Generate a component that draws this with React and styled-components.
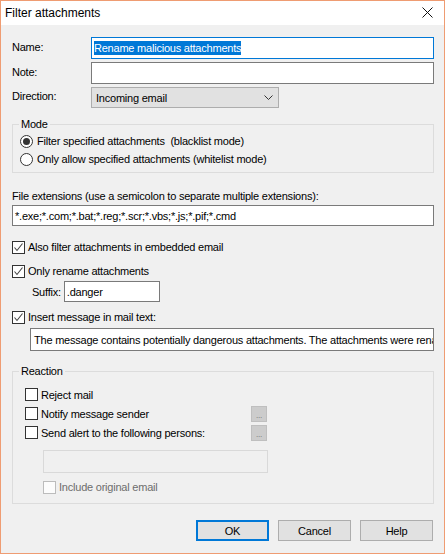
import React from "react";
import styled, { createGlobalStyle } from "styled-components";

const GlobalStyle = createGlobalStyle`
  html, body {
    margin: 0;
    padding: 0;
    background: #ffffff;
  }
  * {
    box-sizing: border-box;
  }
`;

function Check() {
  return (
    <svg width="11" height="11" viewBox="0 0 11 11">
      <polyline
        points="1.5,5.5 4,8.5 9.5,1.5"
        fill="none"
        stroke="#444"
        strokeWidth="1.1"
      />
    </svg>
  );
}

function CheckItem({ label, checked, disabled, indent }) {
  return (
    <CheckRow $indent={indent} $disabled={disabled}>
      <CheckBox $disabled={disabled}>{checked ? <Check /> : null}</CheckBox>
      <span>{label}</span>
    </CheckRow>
  );
}

function RadioItem({ label, checked }) {
  return (
    <RadioRow>
      <RadioCircle>{checked ? <RadioDot /> : null}</RadioCircle>
      <span>{label}</span>
    </RadioRow>
  );
}

export default function App() {
  return (
    <>
      <GlobalStyle />
      <Window>
        <TitleBar>
          <Title>Filter attachments</Title>
          <svg width="11" height="11" viewBox="0 0 11 11">
            <path d="M0.5 0.5 L10.5 10.5 M10.5 0.5 L0.5 10.5" stroke="#111" strokeWidth="1" />
          </svg>
        </TitleBar>
        <Body>
          <FieldRow>
            <Label>Name:</Label>
            <TextBox $focused>
              <Selected>Rename malicious attachments</Selected>
            </TextBox>
          </FieldRow>
          <FieldRow>
            <Label>Note:</Label>
            <TextBox />
          </FieldRow>
          <FieldRow $last>
            <Label>Direction:</Label>
            <Combo>
              <span>Incoming email</span>
              <svg width="9" height="5" viewBox="0 0 9 5">
                <polyline points="0.5,0.5 4.5,4.5 8.5,0.5" fill="none" stroke="#333" strokeWidth="1" />
              </svg>
            </Combo>
          </FieldRow>

          <Group $top={16} $bottom={4}>
            <Legend>Mode</Legend>
            <RadioList>
              <RadioItem checked label="Filter specified attachments  (blacklist mode)" />
              <RadioItem label="Only allow specified attachments (whitelist mode)" />
            </RadioList>
          </Group>

          <PlainLabel>File extensions (use a semicolon to separate multiple extensions):</PlainLabel>
          <TextBox $height={21} $gap={2}>*.exe;*.com;*.bat;*.reg;*.scr;*.vbs;*.js;*.pif;*.cmd</TextBox>

          <Spacer $h={12} />
          <CheckItem checked label="Also filter attachments in embedded email" />
          <Spacer $h={6} />
          <CheckItem checked label="Only rename attachments" />
          <SuffixRow>
            <span>Suffix:</span>
            <TextBox $height={21} $width={96}>.danger</TextBox>
          </SuffixRow>
          <Spacer $h={6} />
          <CheckItem checked label="Insert message in mail text:" />
          <MessageBox>
            The message contains potentially dangerous attachments. The attachments were renamed.
          </MessageBox>

          <Group $top={20} $bottom={7}>
            <Legend>Reaction</Legend>
            <ReactionList>
              <ReactionRow>
                <CheckItem indent={12} label="Reject mail" />
              </ReactionRow>
              <ReactionRow>
                <CheckItem indent={12} label="Notify message sender" />
                <DotsButton>...</DotsButton>
              </ReactionRow>
              <ReactionRow>
                <CheckItem indent={12} label="Send alert to the following persons:" />
                <DotsButton>...</DotsButton>
              </ReactionRow>
              <ListBox />
              <Spacer $h={5} />
              <CheckItem indent={30} disabled label="Include original email" />
            </ReactionList>
          </Group>

          <ButtonBar>
            <Button $default>OK</Button>
            <Button>Cancel</Button>
            <Button>Help</Button>
          </ButtonBar>
        </Body>
      </Window>
    </>
  );
}

const Window = styled.div`
  width: 445px;
  height: 554px;
  border: 1px solid #ef9c72;
  background: #f0f0f0;
  display: flex;
  flex-direction: column;
  font-family: "Liberation Sans", Arial, sans-serif;
  font-size: 11px;
  letter-spacing: -0.22px;
  color: #000;
`;

const TitleBar = styled.div`
  height: 24px;
  flex: none;
  background: #ffffff;
  display: flex;
  align-items: center;
  justify-content: space-between;
  padding: 0 11px 1px 4px;
`;

const Title = styled.div`
  font-family: "Liberation Sans", Arial, sans-serif;
  font-size: 12px;
  letter-spacing: 0;
`;

const Body = styled.div`
  padding: 12px 10px 0 11px;
  display: flex;
  flex-direction: column;
`;

const FieldRow = styled.div`
  display: grid;
  grid-template-columns: 79px 1fr;
  align-items: center;
  margin-bottom: ${(p) => (p.$last ? 0 : 3)}px;
`;

const Label = styled.span`
  line-height: 13px;
  margin-top: -2px;
`;

const TextBox = styled.div`
  height: ${(p) => p.$height || 22}px;
  width: ${(p) => (p.$width ? `${p.$width}px` : "auto")};
  margin-top: ${(p) => p.$gap || 0}px;
  background: #ffffff;
  border: 1px solid ${(p) => (p.$focused ? "#0078d7" : "#7a7a7a")};
  padding: 0 2px;
  display: flex;
  align-items: center;
  white-space: nowrap;
  overflow: hidden;
`;

const Selected = styled.span`
  background: #0078d7;
  color: #ffffff;
  line-height: 14px;
`;

const Combo = styled.div`
  width: 188px;
  height: 21px;
  background: #e1e1e1;
  border: 1px solid #adadad;
  display: flex;
  align-items: center;
  justify-content: space-between;
  padding: 0 5px 0 4px;
`;

const Group = styled.div`
  margin-top: ${(p) => p.$top}px;
  border: 1px solid #dcdcdc;
  padding: 0 0 ${(p) => p.$bottom}px 0;
  display: flex;
  flex-direction: column;
`;

const Legend = styled.span`
  align-self: flex-start;
  margin: -7px 0 0 6px;
  padding: 0 2px;
  line-height: 13px;
  background: #f0f0f0;
`;

const RadioList = styled.div`
  padding: 1px 0 0 7px;
  display: flex;
  flex-direction: column;
`;

const RadioRow = styled.div`
  height: 18px;
  display: flex;
  align-items: center;
  gap: 4px;
  white-space: pre;
`;

const RadioCircle = styled.span`
  width: 13px;
  height: 13px;
  border: 1px solid #333;
  border-radius: 50%;
  background: #fff;
  display: flex;
  align-items: center;
  justify-content: center;
`;

const RadioDot = styled.span`
  width: 7px;
  height: 7px;
  border-radius: 50%;
  background: #333;
`;

const PlainLabel = styled.div`
  margin-top: 17px;
  line-height: 13px;
`;

const Spacer = styled.div`
  height: ${(p) => p.$h}px;
  flex: none;
`;

const CheckRow = styled.div`
  height: 18px;
  display: flex;
  align-items: center;
  gap: 3px;
  padding-left: ${(p) => p.$indent || 0}px;
  color: ${(p) => (p.$disabled ? "#6d6d6d" : "#000")};
`;

const CheckBox = styled.span`
  width: 13px;
  height: 13px;
  flex: none;
  border: 1px solid ${(p) => (p.$disabled ? "#bcbcbc" : "#333")};
  background: ${(p) => (p.$disabled ? "#fcfcfc" : "#fff")};
  display: flex;
  align-items: center;
  justify-content: center;
`;

const SuffixRow = styled.div`
  display: flex;
  align-items: center;
  gap: 3px;
  padding-left: 20px;
  margin-top: 1px;
`;

const MessageBox = styled.div`
  margin: 2px 0 0 18px;
  height: 23px;
  background: #fff;
  border: 1px solid #7a7a7a;
  padding: 0 3px;
  display: flex;
  align-items: center;
  white-space: nowrap;
  overflow: hidden;
`;

const ReactionList = styled.div`
  padding-top: 7px;
  display: flex;
  flex-direction: column;
`;

const ReactionRow = styled.div`
  width: 254px;
  height: 19px;
  display: flex;
  align-items: center;
  justify-content: space-between;
`;

const DotsButton = styled.span`
  width: 16px;
  height: 16px;
  background: #cccccc;
  border: 1px solid #bfbfbf;
  color: #6d6d6d;
  font-size: 8px;
  display: flex;
  align-items: flex-end;
  justify-content: center;
  line-height: 10px;
`;

const ListBox = styled.div`
  margin: 8px 0 0 30px;
  width: 225px;
  height: 23px;
  border: 1px solid #d9d9d9;
  background: #f0f0f0;
`;

const ButtonBar = styled.div`
  margin-top: 16px;
  display: flex;
  justify-content: flex-end;
  gap: 9px;
  padding-right: 1px;
`;

const Button = styled.button`
  width: 73px;
  height: 21px;
  font-family: "Liberation Sans", Arial, sans-serif;
  font-size: 11px;
  letter-spacing: -0.22px;
  color: #000;
  background: #e1e1e1;
  border: ${(p) => (p.$default ? "2px solid #0078d7" : "1px solid #adadad")};
  padding: 0;
`;
